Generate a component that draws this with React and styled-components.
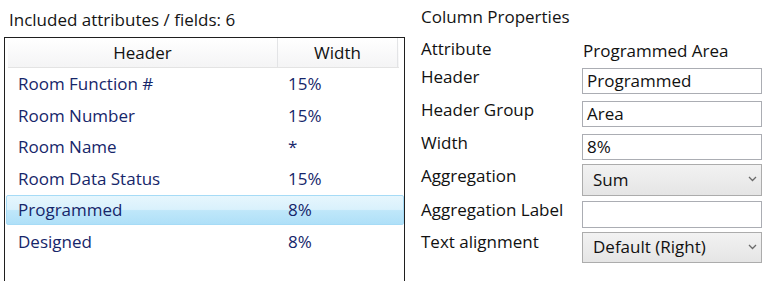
import React from "react";
import styled, { createGlobalStyle } from "styled-components";

const GlobalStyle = createGlobalStyle`
  html, body {
    margin: 0;
    padding: 0;
    background: #fff;
  }
  body {
    font-family: "Open Sans", "Noto Sans", sans-serif;
    font-size: 17px;
    color: #111;
  }
`;

const columns = [
  { key: "header", title: "Header", width: "270px" },
  { key: "width", title: "Width", width: "120px" },
];

const attributes = [
  { header: "Room Function #", width: "15%" },
  { header: "Room Number", width: "15%" },
  { header: "Room Name", width: "*" },
  { header: "Room Data Status", width: "15%" },
  { header: "Programmed", width: "8%", selected: true },
  { header: "Designed", width: "8%" },
];

function Chevron() {
  return (
    <svg width="9" height="6" viewBox="0 0 9 6">
      <path d="M1 1 L4.5 4.5 L8 1" fill="none" stroke="#6a6a6a" strokeWidth="1.3" />
    </svg>
  );
}

export default function App() {
  return (
    <Page>
      <GlobalStyle />
      <LeftPane>
        <PaneTitle $lh={40} $pad={5}>
          Included attributes / fields: {attributes.length}
        </PaneTitle>
        <ListBox>
          <HeaderRow>
            {columns.map((c) => (
              <HeaderCell key={c.key} $width={c.width}>
                {c.title}
              </HeaderCell>
            ))}
          </HeaderRow>
          <Rows>
            {attributes.map((a) => (
              <Row key={a.header} $selected={a.selected}>
                <Cell $width="270px" $pad={11}>{a.header}</Cell>
                <Cell $width="120px" $pad={11}>{a.width}</Cell>
              </Row>
            ))}
          </Rows>
        </ListBox>
      </LeftPane>

      <RightPane>
        <PaneTitle $lh={34} $pad={0}>Column Properties</PaneTitle>
        <Form>
          <FieldRow $h={28}>
            <Label>Attribute</Label>
            <ValueText>Programmed Area</ValueText>
          </FieldRow>
          <FieldRow $h={33}>
            <Label>Header</Label>
            <TextBox>Programmed</TextBox>
          </FieldRow>
          <FieldRow $h={33}>
            <Label>Header Group</Label>
            <TextBox>Area</TextBox>
          </FieldRow>
          <FieldRow $h={31}>
            <Label>Width</Label>
            <TextBox>8%</TextBox>
          </FieldRow>
          <FieldRow $h={36}>
            <Label $top={3}>Aggregation</Label>
            <ComboBox $h={32}>
              <span>Sum</span>
              <Chevron />
            </ComboBox>
          </FieldRow>
          <FieldRow $h={32}>
            <Label>Aggregation Label</Label>
            <TextBox $h={27} />
          </FieldRow>
          <FieldRow $h={35}>
            <Label>Text alignment</Label>
            <ComboBox $h={31}>
              <span>Default (Right)</span>
              <Chevron />
            </ComboBox>
          </FieldRow>
        </Form>
      </RightPane>
    </Page>
  );
}

const Page = styled.div`
  display: flex;
  width: 769px;
  height: 281px;
  overflow: hidden;
  background: #fff;
`;

const LeftPane = styled.div`
  display: flex;
  flex-direction: column;
  width: 405px;
  flex-shrink: 0;
  padding-left: 4px;
  box-sizing: border-box;
`;

const PaneTitle = styled.div`
  height: 37px;
  line-height: ${(p) => p.$lh}px;
  padding-left: ${(p) => p.$pad}px;
  color: #141414;
  white-space: nowrap;
`;

const ListBox = styled.div`
  flex: 1;
  border: 1.5px solid #1f1f1f;
  border-bottom: none;
  box-sizing: border-box;
  padding: 0 0 0 1px;
`;

const HeaderRow = styled.div`
  display: flex;
  height: 29px;
  margin: 0 5px 0 2px;
  background: linear-gradient(#ffffff, #f4f4f5);
  border-bottom: 1px solid #e3e3e3;
`;

const HeaderCell = styled.div`
  width: ${(p) => p.$width};
  display: flex;
  align-items: center;
  justify-content: center;
  border-right: 1px solid #e3e4e6;
  color: #111;
  box-sizing: border-box;
`;

const Rows = styled.div`
  display: flex;
  flex-direction: column;
  padding-top: 0.5px;
`;

const Row = styled.div`
  display: flex;
  align-items: center;
  height: 30px;
  margin: 0 0 1.6px 0;
  border: 1px solid ${(p) => (p.$selected ? "#a6dbf6" : "transparent")};
  border-radius: 2px;
  background: ${(p) =>
    p.$selected
      ? "linear-gradient(#e6f6fd 0%, #d9f1fc 48%, #bfe7fa 52%, #afe0f8 100%)"
      : "transparent"};
  color: #16266a;
  box-sizing: border-box;
`;

const Cell = styled.div`
  width: ${(p) => p.$width};
  padding-left: ${(p) => p.$pad}px;
  box-sizing: border-box;
  white-space: nowrap;
`;

const RightPane = styled.div`
  display: flex;
  flex-direction: column;
  padding-left: 16px;
`;

const Form = styled.div`
  display: flex;
  flex-direction: column;
`;

const FieldRow = styled.div`
  display: grid;
  grid-template-columns: 161px 180px;
  height: ${(p) => p.$h}px;
`;

const Label = styled.div`
  line-height: 22px;
  padding-top: ${(p) => p.$top ?? 1}px;
  color: #111;
  white-space: nowrap;
`;

const ValueText = styled.div`
  line-height: 22px;
  padding-top: 3px;
  padding-left: 1px;
  color: #111;
  white-space: nowrap;
`;

const TextBox = styled.div`
  height: ${(p) => p.$h ?? 26}px;
  margin-top: 3px;
  border: 1px solid #abadb3;
  box-sizing: border-box;
  background: #fff;
  padding-left: 4px;
  line-height: 24px;
  color: #111;
`;

const ComboBox = styled.div`
  display: flex;
  align-items: center;
  justify-content: space-between;
  height: ${(p) => p.$h}px;
  margin-top: 2px;
  border: 1px solid #acacac;
  box-sizing: border-box;
  background: linear-gradient(#f2f2f2, #e5e5e5);
  padding: 0 4px 2px 10px;
  color: #111;
`;
